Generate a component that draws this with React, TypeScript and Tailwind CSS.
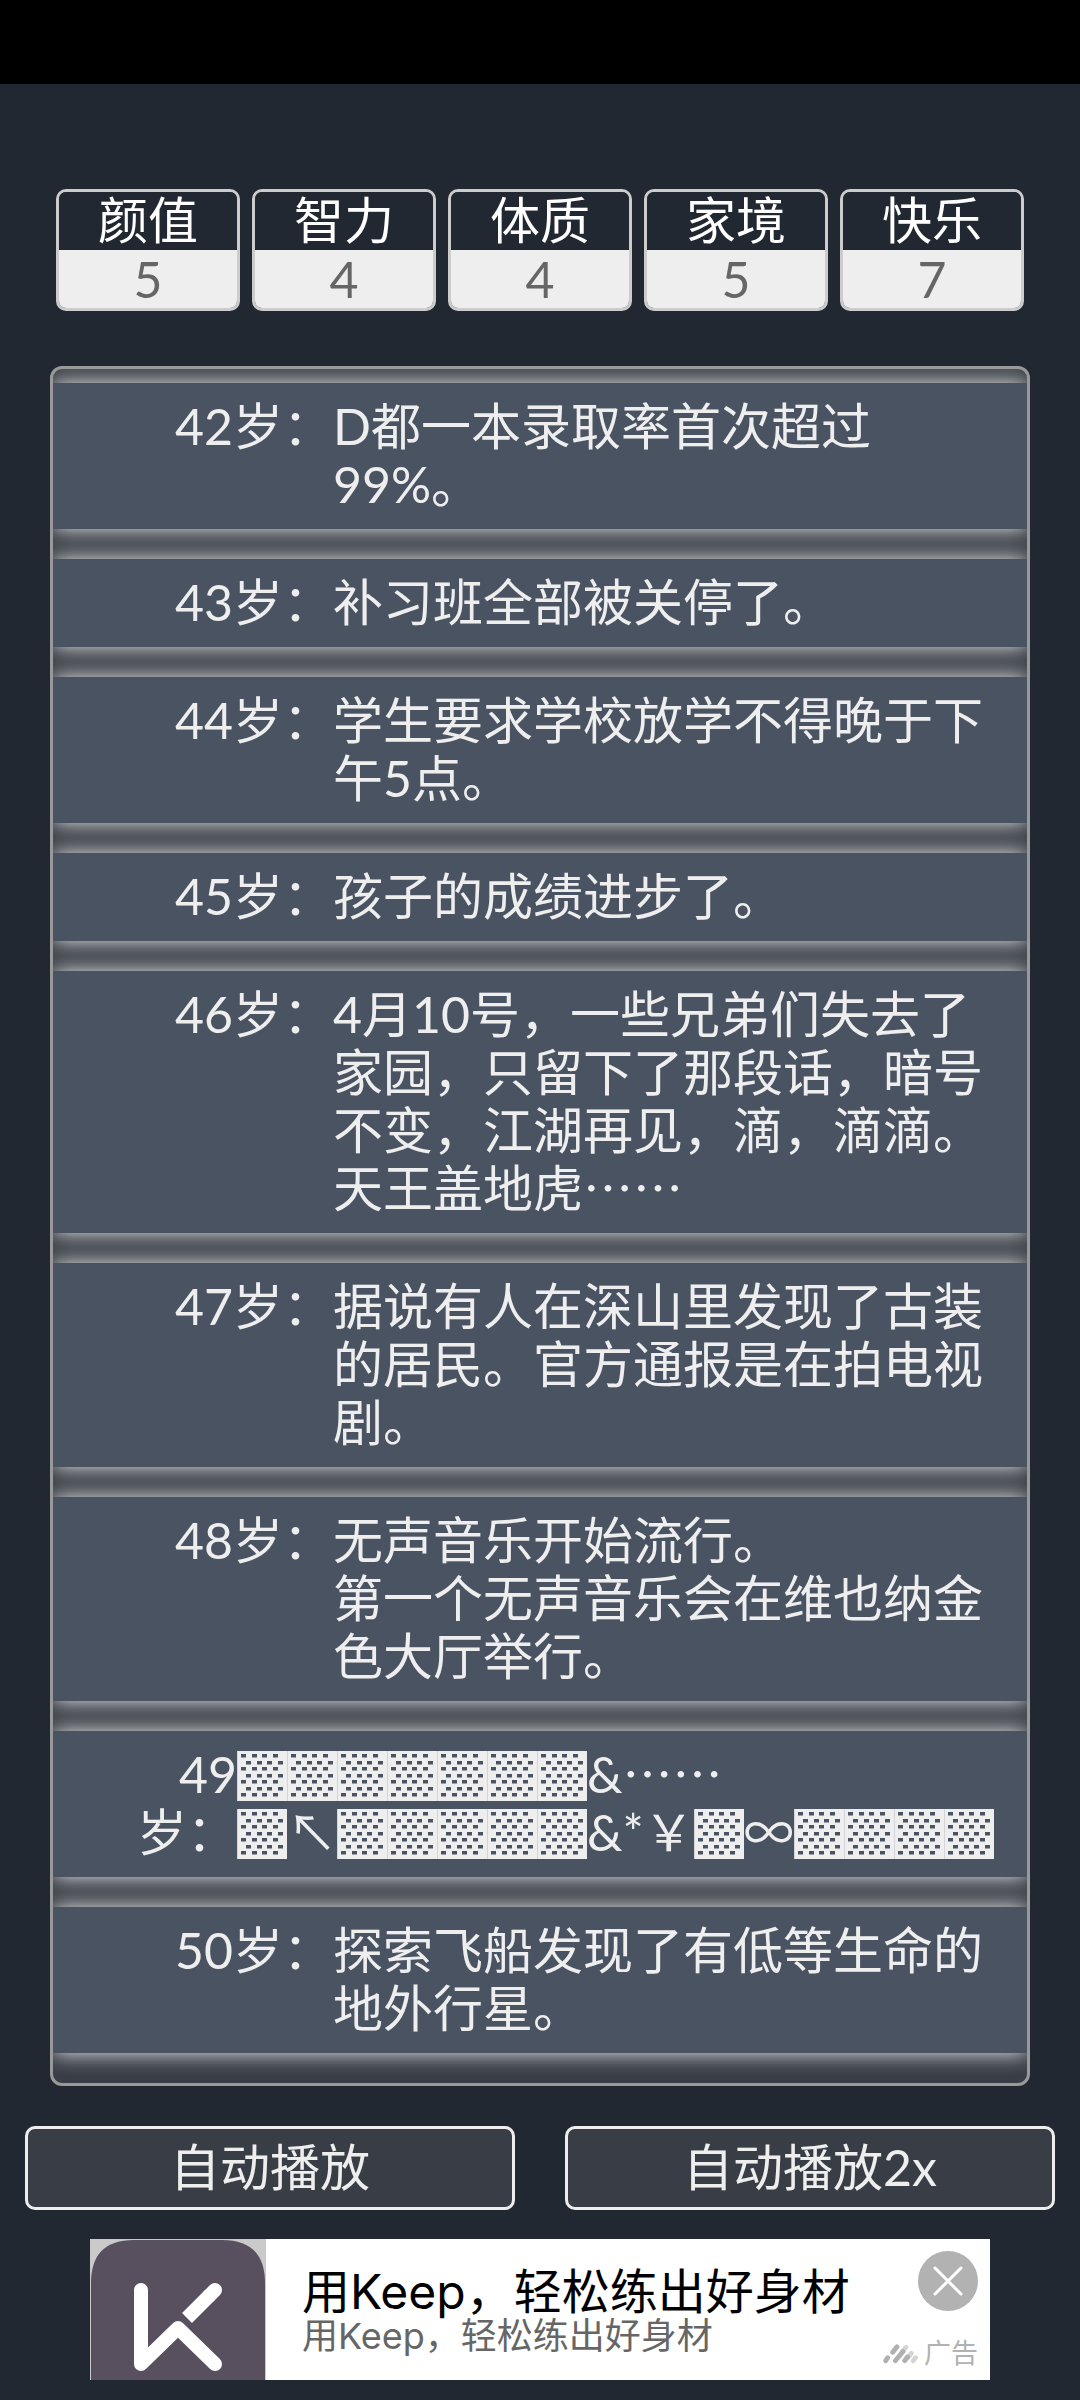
type Entry = {
  age: number;
  lines: string[];
  garbled?: boolean;
};

const stats = [
  { label: "颜值", value: 5 },
  { label: "智力", value: 4 },
  { label: "体质", value: 4 },
  { label: "家境", value: 5 },
  { label: "快乐", value: 7 },
];

const entries: Entry[] = [
  { age: 42, lines: ["D都一本录取率首次超过99%。"] },
  { age: 43, lines: ["补习班全部被关停了。"] },
  { age: 44, lines: ["学生要求学校放学不得晚于下午5点。"] },
  { age: 45, lines: ["孩子的成绩进步了。"] },
  {
    age: 46,
    lines: [
      "4月10号，一些兄弟们失去了家园，只留下了那段话，暗号不变，江湖再见，滴，滴滴。天王盖地虎……",
    ],
  },
  {
    age: 47,
    lines: ["据说有人在深山里发现了古装的居民。官方通报是在拍电视剧。"],
  },
  {
    age: 48,
    lines: ["无声音乐开始流行。", "第一个无声音乐会在维也纳金色大厅举行。"],
  },
  {
    age: 49,
    lines: ["▓▓▓▓▓▓▓&……", "▓↖▓▓▓▓▓&*￥▓∞▓▓▓▓"],
    garbled: true,
  },
  { age: 50, lines: ["探索飞船发现了有低等生命的地外行星。"] },
];

const holeRows = [3, 10, 16, 23, 29, 36, 42];
const holeCols = [4, 15, 25, 36];

// One shaded block character, with its dot pattern drawn on top
function ShadeBlock() {
  return (
    <span className="relative inline-block size-[50px] overflow-hidden bg-[#eeeeee] text-center align-[-8px] font-['Noto_Sans_CJK_SC',sans-serif] text-[32px] leading-[50px] text-[#eeeeee]">
      ▓
      <svg viewBox="0 0 50 50" className="absolute inset-0 size-full" aria-hidden="true">
        <rect width="1" height="50" fill="#d3d5d8" />
        {holeRows.map((y, row) =>
          holeCols.map((x) => (
            <rect
              key={`${x}-${y}`}
              x={row % 2 === 0 ? x : x + 5}
              y={y}
              width="5"
              height="3.5"
              fill="#4a5361"
            />
          ))
        )}
      </svg>
    </span>
  );
}

function RichText({ text }: { text: string }) {
  return (
    <>
      {text.split(/(▓|[…↖∞￥]+)/).map((part, i) => {
        if (part === "▓") {
          return <ShadeBlock key={i} />;
        }
        // symbols that should come from the full-width CJK font instead of Lato
        if (/[…↖∞￥]/.test(part)) {
          return (
            <span key={i} className="font-['Noto_Sans_CJK_SC',sans-serif] leading-none">
              {part}
            </span>
          );
        }
        return part;
      })}
    </>
  );
}

function StatCard({ label, value }: { label: string; value: number }) {
  return (
    <div className="flex-1 overflow-hidden rounded-[10px] border-3 border-[#cccccc] text-center">
      <dt className="bg-[#222831] pb-0.5 leading-[56px] text-white">{label}</dt>
      <dd className="bg-[#eeeeee] text-[#666666]">{value}</dd>
    </div>
  );
}

function EntryRow({ entry }: { entry: Entry }) {
  return (
    <li className="flex bg-[#4a5361] pt-[14px] pr-[30px] pb-4 shadow-[0_0_20px_#eeeeee]">
      {entry.garbled ? (
        <span className="w-[184px] shrink-0 text-right">
          {entry.age}
          <br />
          岁：
        </span>
      ) : (
        <span className="w-[280px] shrink-0 text-right">{entry.age}岁：</span>
      )}
      <div className="min-w-0 flex-1">
        {entry.lines.map((line) => (
          <p key={line} className={entry.garbled ? "whitespace-nowrap" : ""}>
            <RichText text={line} />
          </p>
        ))}
      </div>
    </li>
  );
}

function KeepIcon() {
  return (
    <svg viewBox="0 0 176 141" className="h-[141px] w-[176px] shrink-0" aria-hidden="true">
      <rect width="176" height="141" fill="#cacaca" />
      <path d="M1 141V44Q1 1 44 1H132Q175 1 175 44V141Z" fill="#584f5f" />
      <g fill="none" stroke="#fff" strokeWidth="14" strokeLinejoin="round">
        <path d="M51 51V125L88 89L125 125" strokeLinecap="round" />
        <path d="M97 79L120 56" />
        <path d="M119 57L125 51" strokeLinecap="round" />
      </g>
    </svg>
  );
}

function AdMark() {
  return (
    <svg viewBox="0 0 35 20" className="h-5 w-[35px]" aria-hidden="true">
      <g fill="none" strokeWidth="4.8" strokeLinecap="round">
        <path d="M19 8L23 3.3M25.5 13L28.3 9.3M30.3 16.7L32.5 13.7" stroke="#d4d4d4" />
        <path
          d="M2.7 16.7L4.7 13.7M9.7 8.3L14 2.8M12.3 16.7L20 7.5M21.7 16.7L24.5 13"
          stroke="#b0b0b0"
        />
      </g>
    </svg>
  );
}

export default function App() {
  return (
    <div
      lang="zh-CN"
      className="flex min-h-screen flex-col bg-[#222831] pb-5 font-['Lato','Noto_Sans_CJK_SC',sans-serif] text-[50px] leading-[58px] text-[#eeeeee]"
    >
      <div className="h-[84px] bg-black" />

      <dl className="mt-[105px] flex gap-3 px-14">
        {stats.map((stat) => (
          <StatCard key={stat.label} label={stat.label} value={stat.value} />
        ))}
      </dl>

      <main className="mx-[50px] mt-[55px] overflow-hidden rounded-xl border-3 border-[#999999] bg-[#393e46] pb-[30px]">
        {/* bottom edge of the entry that is scrolled out of view */}
        <div className="-mt-16 mb-[30px] h-12 shadow-[0_0_20px_#eeeeee]" />
        <ul className="flex flex-col gap-[30px]">
          {entries.map((entry) => (
            <EntryRow key={entry.age} entry={entry} />
          ))}
        </ul>
      </main>

      <div className="mt-10 flex gap-[50px] px-[25px]">
        <button
          type="button"
          className="h-[84px] flex-1 rounded-[10px] border-3 border-[#eeeeee] bg-[#393e46] pb-0.5"
        >
          自动播放
        </button>
        <button
          type="button"
          className="h-[84px] flex-1 rounded-[10px] border-3 border-[#eeeeee] bg-[#393e46] pb-0.5"
        >
          自动播放2x
        </button>
      </div>

      <aside className="mx-[90px] mt-[29px] flex bg-white font-['Inter','Noto_Sans_CJK_SC',sans-serif]">
        <KeepIcon />
        <div className="flex-1 pt-[29px] pl-9">
          <h2 className="text-[48px] leading-[48px] text-black">用Keep，轻松练出好身材</h2>
          <p className="text-[36px] leading-[40px] text-[#666666]">用Keep，轻松练出好身材</p>
        </div>
        <div className="flex flex-col items-end justify-between py-3 pr-3">
          <button
            type="button"
            aria-label="关闭广告"
            className="flex size-[60px] items-center justify-center rounded-full bg-[#b2b2b2]"
          >
            <svg viewBox="0 0 30 30" className="size-[30px]" aria-hidden="true">
              <path d="M2 2L28 28M28 2L2 28" stroke="#fff" strokeWidth="3" strokeLinecap="round" />
            </svg>
          </button>
          <div className="flex items-center gap-1.5 text-[27px] leading-[28px] text-[#b2b2b2]">
            <AdMark />
            <span>广告</span>
          </div>
        </div>
      </aside>
    </div>
  );
}
